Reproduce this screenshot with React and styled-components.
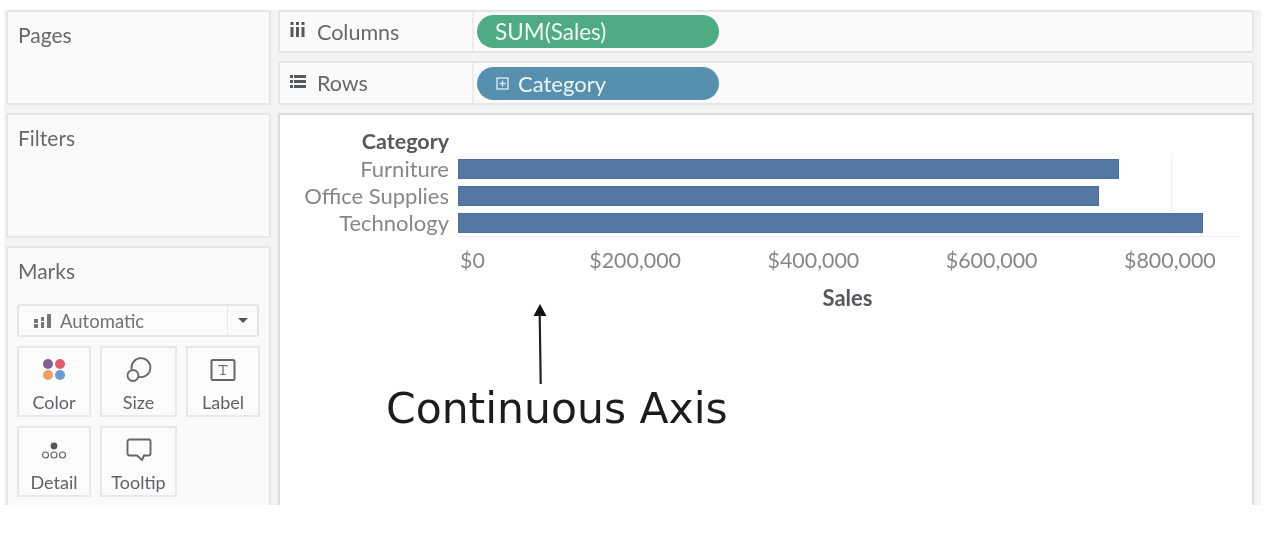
import React from "react";
import styled, { createGlobalStyle } from "styled-components";

const GlobalStyle = createGlobalStyle`
	html, body {
		margin: 0;
		padding: 0;
		background: #fff;
	}
	body {
		width: 1288px;
		height: 534px;
		overflow: hidden;
		font-family: Lato, "Open Sans", sans-serif;
	}
`;

const Page = styled.div`
	width: 1288px;
	height: 534px;
	padding: 10px 0 0 4px;
	box-sizing: border-box;
	filter: blur(0.6px);
`;

const Workspace = styled.div`
	width: 1257px;
	height: 495px;
	box-sizing: border-box;
	padding-left: 2px;
	padding-right: 7px;
	background: #f3f3f3;
	overflow: hidden;
	display: grid;
	grid-template-columns: 265px 976px;
	column-gap: 7px;
`;

const Sidebar = styled.div`
	display: flex;
	flex-direction: column;
	gap: 8px;
`;

const Panel = styled.section`
	box-sizing: border-box;
	height: ${(p) => p.$height}px;
	padding: 11px 10px 0 10px;
	background: #fafafa;
	border: 2px solid #e6e6e6;
	border-radius: 2px;
`;

const PanelTitle = styled.div`
	font-size: 21px;
	line-height: 24px;
	color: #66696c;
`;

const TypeSelect = styled.div`
	margin-top: 21px;
	margin-left: -1px;
	width: 242px;
	height: 33px;
	box-sizing: border-box;
	display: flex;
	align-items: center;
	background: #fbfbfb;
	border: 2px solid #e6e6e6;
	border-radius: 3px;
	color: #6f7275;
	font-size: 18.5px;
`;

const TypeValue = styled.div`
	flex: 1;
	display: flex;
	align-items: center;
	gap: 8px;
	padding-left: 14px;
`;

const Caret = styled.div`
	width: 29px;
	height: 100%;
	border-left: 1px solid #e8e8e8;
	display: flex;
	align-items: center;
	justify-content: center;
	&::after {
		content: "";
		border-left: 5px solid transparent;
		border-right: 5px solid transparent;
		border-top: 5px solid #555;
	}
`;

const MarkGrid = styled.div`
	margin-top: 9px;
	margin-left: -1px;
	display: grid;
	grid-template-columns: 74px 77px 74px;
	grid-auto-rows: 71px;
	gap: 9px;
`;

const MarkButton = styled.div`
	box-sizing: border-box;
	display: flex;
	flex-direction: column;
	align-items: center;
	padding-top: 8px;
	background: #fbfbfb;
	border: 2px solid #e8e8e8;
	color: #5f6266;
	font-size: 18px;
	line-height: 22px;
	svg {
		display: block;
		height: 28px;
		margin-bottom: 7px;
	}
`;

const Main = styled.div`
	display: flex;
	flex-direction: column;
	gap: 8px;
`;

const Shelf = styled.div`
	box-sizing: border-box;
	height: ${(p) => p.$height}px;
	display: flex;
	align-items: center;
	background: #fafafa;
	border: 2px solid #e6e6e6;
	border-radius: 2px;
`;

const ShelfLabel = styled.div`
	width: 194px;
	height: 100%;
	box-sizing: border-box;
	display: flex;
	align-items: center;
	gap: 11px;
	padding-left: 10px;
	border-right: 2px solid #ececec;
	color: #66696c;
	font-size: 21.5px;
	svg {
		margin-bottom: 4px;
	}
`;

const Pill = styled.div`
	margin-left: 3px;
	width: 242px;
	height: 33px;
	box-sizing: border-box;
	display: flex;
	align-items: center;
	gap: 9px;
	padding-left: ${(p) => (p.$kind === "measure" ? 18 : 19)}px;
	border-radius: 17px;
	background: ${(p) => (p.$kind === "measure" ? "#4fac82" : "#5790ae")};
	color: #eef6f3;
	font-size: ${(p) => (p.$kind === "measure" ? 22.5 : 22)}px;
`;

const ChartPanel = styled.section`
	flex: 1;
	box-sizing: border-box;
	padding-top: 13px;
	background: #fff;
	border: 2px solid #dcdcdc;
	border-bottom: none;
	border-radius: 2px 2px 0 0;
`;

const ChartGrid = styled.div`
	display: grid;
	grid-template-columns: 169px 782px;
	column-gap: 9px;
`;

const HeaderCell = styled.div`
	grid-column: 1 / 3;
	height: 27px;
	width: 169px;
	text-align: right;
	font-size: 21.5px;
	line-height: 27px;
	font-weight: 700;
	color: #55585c;
`;

const Labels = styled.div`
	display: flex;
	flex-direction: column;
`;

const CategoryLabel = styled.div`
	height: 27px;
	text-align: right;
	font-size: 22px;
	line-height: 27px;
	color: #85888b;
	white-space: nowrap;
`;

const Plot = styled.div`
	position: relative;
	height: 81px;
	border-bottom: 1px solid #f1f1f1;
`;

const Gridline = styled.div`
	position: absolute;
	left: 713px;
	top: 0;
	bottom: 0;
	width: 1px;
	background: #f1f1f1;
`;

const BarRow = styled.div`
	position: relative;
	height: 27px;
	display: flex;
	align-items: center;
`;

const Bar = styled.div`
	height: 20px;
	box-sizing: border-box;
	background: #5577a3;
	border: 1px solid #4e6f9c;
`;

const Axis = styled.div`
	grid-column: 2;
	margin-top: 9px;
	display: flex;
	height: 28px;
	align-items: center;
	font-size: 21.4px;
	color: #85888b;
`;

const Tick = styled.div`
	width: ${(p) => (p.$first ? 88 : 178.25)}px;
	flex: none;
	text-align: ${(p) => (p.$first ? "left" : "center")};
	padding-left: ${(p) => (p.$first ? 2 : 0)}px;
	box-sizing: border-box;
	white-space: nowrap;
`;

const AxisTitle = styled.div`
	grid-column: 2;
	margin-top: 12px;
	width: 779px;
	text-align: center;
	font-size: 22px;
	line-height: 24px;
	font-weight: 700;
	color: #55585c;
`;

const Annotation = styled.div`
	margin: -6px 0 0 106px;
	display: flex;
	flex-direction: column;
	align-items: flex-start;
	color: #1c1c1c;
	svg {
		margin-left: 146px;
	}
`;

const AnnotationText = styled.div`
	font-family: "DejaVu Sans", Verdana, sans-serif;
	font-size: 42.5px;
	line-height: 48px;
	white-space: nowrap;
`;

const ColumnsIcon = () => (
	<svg width="16" height="16" viewBox="0 0 16 16" fill="#55585c">
		<rect x="0.5" y="0" width="3" height="3" />
		<rect x="6" y="0" width="3" height="3" />
		<rect x="11.5" y="0" width="3" height="3" />
		<rect x="0.5" y="5" width="3" height="10" />
		<rect x="6" y="5" width="3" height="10" />
		<rect x="11.5" y="5" width="3" height="10" />
	</svg>
);

const RowsIcon = () => (
	<svg width="16" height="15" viewBox="0 0 16 15" fill="#55585c">
		<rect x="0" y="1" width="3" height="3" />
		<rect x="0" y="6" width="3" height="3" />
		<rect x="0" y="11" width="3" height="3" />
		<rect x="4" y="1" width="12" height="3" />
		<rect x="4" y="6" width="12" height="3" />
		<rect x="4" y="11" width="12" height="3" />
	</svg>
);

const ExpandIcon = () => (
	<svg width="13" height="13" viewBox="0 0 13 13" fill="none" stroke="#e4f0f3" strokeWidth="1.3">
		<rect x="1" y="1" width="11" height="11" />
		<path d="M3.5 6.5h6M6.5 3.5v6" />
	</svg>
);

const BarsIcon = () => (
	<svg width="19" height="16" viewBox="0 0 19 16" fill="#777">
		<rect x="1" y="6" width="4" height="4" />
		<rect x="1" y="11" width="4" height="4" />
		<rect x="8" y="4" width="3" height="4" />
		<rect x="8" y="9" width="3" height="6" />
		<rect x="14" y="1" width="4" height="14" />
	</svg>
);

const ColorIcon = () => (
	<svg width="24" height="28" viewBox="0 0 24 28">
		<circle cx="6" cy="8" r="5" fill="#7d5f93" />
		<circle cx="18" cy="8" r="5" fill="#e0596f" />
		<circle cx="6" cy="19" r="5" fill="#ef9f62" />
		<circle cx="18" cy="19" r="5" fill="#6f9bcc" />
	</svg>
);

const SizeIcon = () => (
	<svg width="28" height="28" viewBox="0 0 28 28" fill="none" stroke="#666" strokeWidth="1.8">
		<path d="M6.5 13 A9.500 9.500 0 1 1 14 21" />
		<circle cx="8" cy="19.5" r="5.5" />
	</svg>
);

const LabelIcon = () => (
	<svg width="26" height="28" viewBox="0 0 26 28" fill="none" stroke="#666">
		<rect x="1.5" y="4" width="23" height="20" rx="1.5" strokeWidth="2" />
		<path d="M9 10.5v-1h8v1M13 9.5v9M10.5 18.5h5" strokeWidth="1.2" />
	</svg>
);

const DetailIcon = () => (
	<svg width="28" height="28" viewBox="0 0 28 28" fill="none" stroke="#666" strokeWidth="1.2">
		<circle cx="14" cy="10" r="3.4" fill="#555" stroke="none" />
		<circle cx="5.5" cy="19" r="3" />
		<circle cx="14" cy="19" r="3" />
		<circle cx="22.5" cy="19" r="3" />
	</svg>
);

const TooltipIcon = () => (
	<svg width="26" height="28" viewBox="0 0 26 28" fill="none" stroke="#666" strokeWidth="1.9">
		<path d="M3.5 3.5h19a2 2 0 0 1 2 2v12a2 2 0 0 1-2 2h-4.500l-2 4.500-5-4.500h-7.500a2 2 0 0 1-2-2v-12a2 2 0 0 1 2-2z" />
	</svg>
);

const ArrowIcon = () => (
	<svg width="16" height="81" viewBox="0 0 16 81" style={{ display: "block" }}>
		<path d="M8 0 L14.500 12 L1.500 12 Z" fill="#111" />
		<path d="M7.700 10 L8.700 80" stroke="#222" strokeWidth="2.200" fill="none" />
	</svg>
);

const categories = [
	{ name: "Furniture", sales: 741718 },
	{ name: "Office Supplies", sales: 719047 },
	{ name: "Technology", sales: 836154 },
];

const ticks = ["$0", "$200,000", "$400,000", "$600,000", "$800,000"];

const marks = [
	{ name: "Color", icon: <ColorIcon /> },
	{ name: "Size", icon: <SizeIcon /> },
	{ name: "Label", icon: <LabelIcon /> },
	{ name: "Detail", icon: <DetailIcon /> },
	{ name: "Tooltip", icon: <TooltipIcon /> },
];

export default function App() {
	return (
		<Page>
			<GlobalStyle />
			<Workspace>
				<Sidebar>
					<Panel $height={95}>
						<PanelTitle>Pages</PanelTitle>
					</Panel>
					<Panel $height={125}>
						<PanelTitle>Filters</PanelTitle>
					</Panel>
					<Panel $height={280}>
						<PanelTitle>Marks</PanelTitle>
						<TypeSelect>
							<TypeValue>
								<BarsIcon />
								Automatic
							</TypeValue>
							<Caret />
						</TypeSelect>
						<MarkGrid>
							{marks.map(({ name, icon }) => (
								<MarkButton key={name}>
									{icon}
									{name}
								</MarkButton>
							))}
						</MarkGrid>
					</Panel>
				</Sidebar>
				<Main>
					<Shelf $height={43}>
						<ShelfLabel>
							<ColumnsIcon />
							Columns
						</ShelfLabel>
						<Pill $kind="measure">SUM(Sales)</Pill>
					</Shelf>
					<Shelf $height={44}>
						<ShelfLabel>
							<RowsIcon />
							Rows
						</ShelfLabel>
						<Pill $kind="dimension">
							<ExpandIcon />
							Category
						</Pill>
					</Shelf>
					<ChartPanel>
						<ChartGrid>
							<HeaderCell>Category</HeaderCell>
							<Labels>
								{categories.map(({ name }) => (
									<CategoryLabel key={name}>{name}</CategoryLabel>
								))}
							</Labels>
							<Plot>
								<Gridline />
								{categories.map(({ name, sales }) => (
									<BarRow key={name}>
										<Bar style={{ width: (sales / 800000) * 713 }} />
									</BarRow>
								))}
							</Plot>
							<Axis>
								{ticks.map((tick, i) => (
									<Tick key={tick} $first={i === 0}>
										{tick}
									</Tick>
								))}
							</Axis>
							<AxisTitle>Sales</AxisTitle>
						</ChartGrid>
						<Annotation>
							<ArrowIcon />
							<AnnotationText>Continuous Axis</AnnotationText>
						</Annotation>
					</ChartPanel>
				</Main>
			</Workspace>
		</Page>
	);
}
